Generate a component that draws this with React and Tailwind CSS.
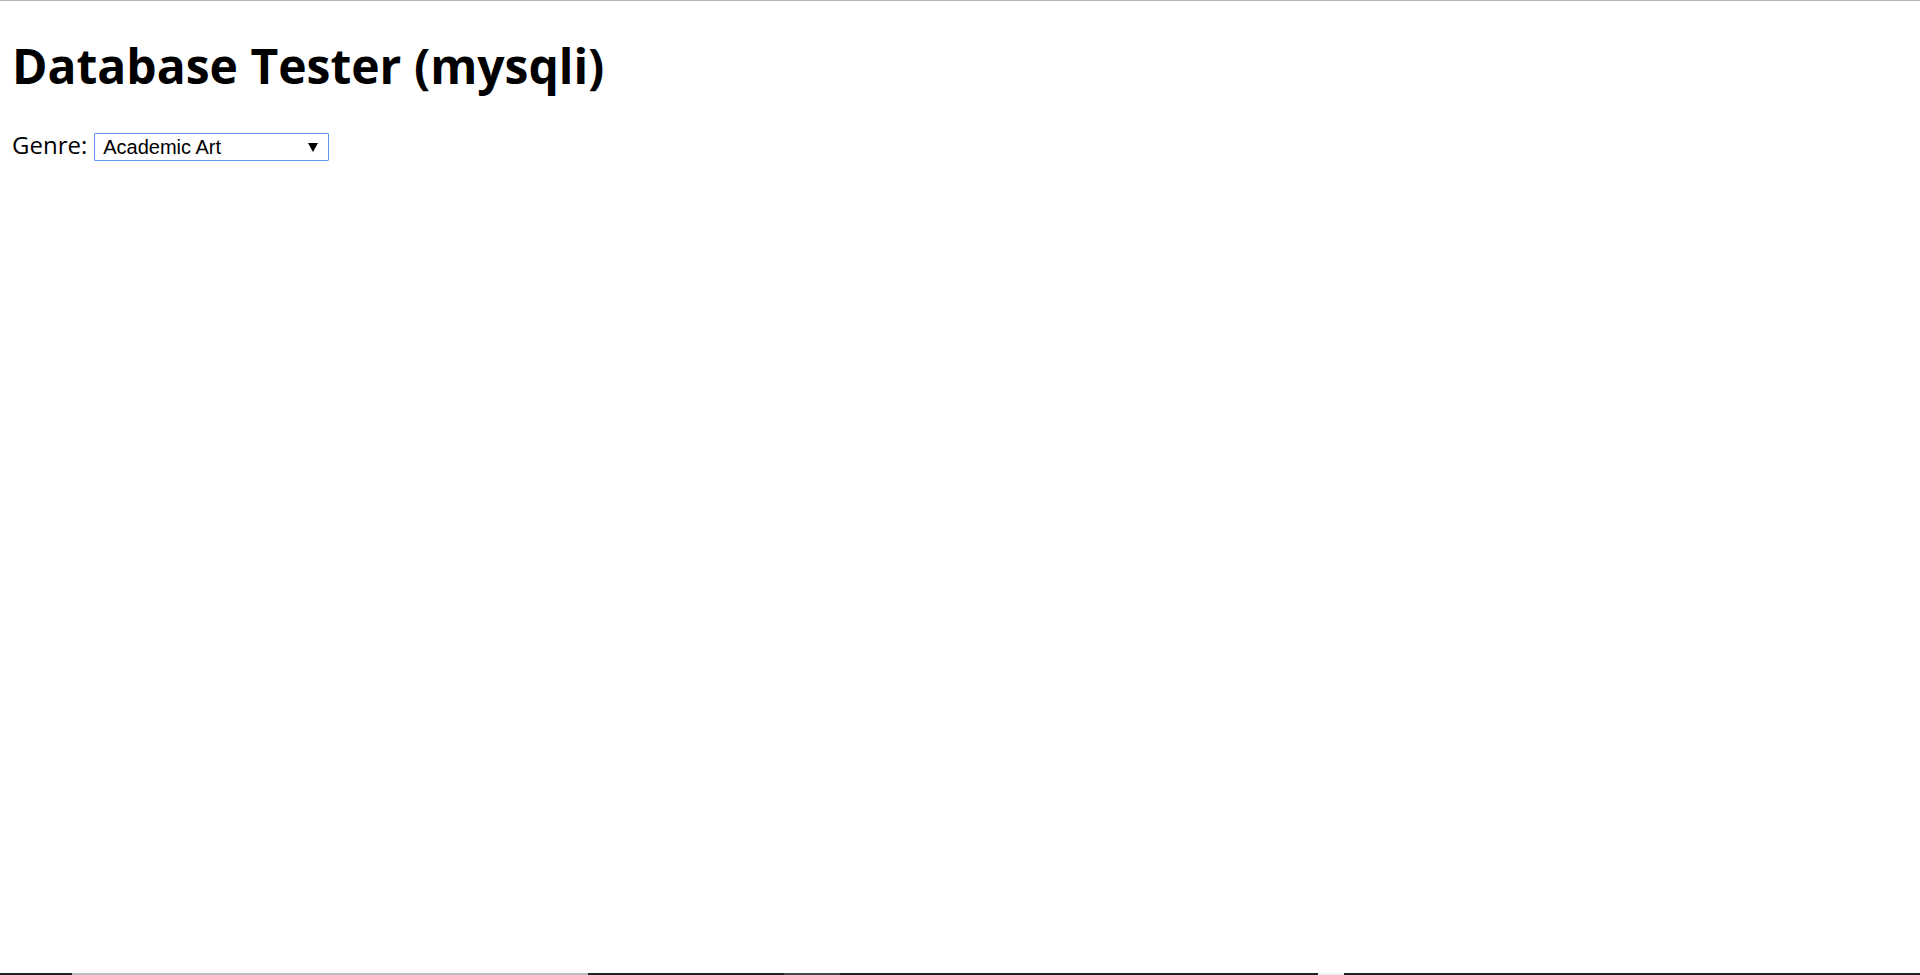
import React, { useState } from "react";

const genres = ["Academic Art", "Baroque", "Cubism", "Impressionism", "Renaissance", "Surrealism"];

// taskbar-ish strip at the very bottom of the capture
const strip = [
  { w: "w-[72px]", c: "bg-[#222222]" },
  { w: "w-[516px]", c: "bg-[#bdbdbd]" },
  { w: "w-[196px]", c: "bg-[#222222]" },
  { w: "w-[56px]", c: "bg-[#474747]" },
  { w: "w-[478px]", c: "bg-[#222222]" },
  { w: "w-[26px]", c: "bg-[#eeeeee]" },
];

function App() {
  const [genre, setGenre] = useState(genres[0]);

  return (
    <div className="min-h-screen flex flex-col bg-white border-t border-[#b4b4b4] text-black">
      <main className="flex-1 px-3">
        <h1
          className="text-[48px] leading-[64px] font-bold mt-[33px] mb-[33px]"
          style={{ fontFamily: '"Open Sans", "Noto Sans", sans-serif' }}
        >
          Database Tester (mysqli)
        </h1>

        {/* Genre picker */}
        <div className="flex items-center">
          <label
            htmlFor="genre"
            className="text-[24px] leading-[28px] pb-[4px] mr-[7px]"
            style={{ fontFamily: '"Open Sans", "Noto Sans", sans-serif' }}
          >
            Genre:
          </label>
          <div className="relative">
            <select
              id="genre"
              value={genre}
              onChange={(e) => setGenre(e.target.value)}
              className="appearance-none w-[235px] h-[28px] border border-[#5f95ee] rounded-[1px] bg-white pl-2 pr-6 text-[20px] leading-[26px] outline-none"
              style={{ fontFamily: '"Liberation Sans", Arial, sans-serif' }}
            >
              {genres.map((g) => (
                <option key={g} value={g}>
                  {g}
                </option>
              ))}
            </select>
            <svg
              className="absolute right-[11px] top-[10px] pointer-events-none"
              width="10"
              height="9"
              viewBox="0 0 10 9"
            >
              <path d="M0 0 L10 0 L5 9 Z" fill="#000" />
            </svg>
          </div>
        </div>
      </main>

      <div className="flex h-[2px]">
        {strip.map((s, i) => (
          <div key={i} className={`${s.w} ${s.c}`} />
        ))}
        <div className="flex-1 bg-[#222222]" />
      </div>
    </div>
  );
}

export default App;
